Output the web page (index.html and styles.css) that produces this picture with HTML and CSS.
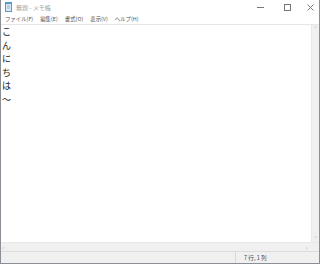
FILE: index.html
```html
<!DOCTYPE html>
<html lang="ja">
<head>
    <meta charset="UTF-8">
    <title>無題 - メモ帳</title>
    <link rel="stylesheet" href="styles.css">
</head>
<body>
    <div class="window">
        <div class="titlebar">
            <svg class="app-icon" width="9" height="10" viewBox="0 0 9 10">
                <rect x="1.5" y="0.5" width="6" height="9" fill="#d8eaf6" stroke="#5a9ac8"/>
                <rect x="1" y="0" width="7" height="2" fill="#5a9ac8"/>
                <line x1="3" y1="4" x2="6" y2="4" stroke="#8ab8dc"/>
                <line x1="3" y1="6" x2="6" y2="6" stroke="#8ab8dc"/>
            </svg>
            <span class="title">無題 - メモ帳</span>
            <div class="controls">
                <span class="ctl"><svg width="7" height="7" viewBox="0 0 7 7"><line x1="0" y1="3.5" x2="7" y2="3.5" stroke="#777"/></svg></span>
                <span class="ctl"><svg width="7" height="7" viewBox="0 0 7 7"><rect x="0.5" y="0.5" width="6" height="6" fill="none" stroke="#777"/></svg></span>
                <span class="ctl ctl-close"><svg width="7" height="7" viewBox="0 0 7 7"><path d="M0.5 0.5 L6.5 6.5 M6.5 0.5 L0.5 6.5" stroke="#777"/></svg></span>
            </div>
        </div>
        <div class="menubar">
            <span>ファイル(F)</span>
            <span>編集(E)</span>
            <span>書式(O)</span>
            <span>表示(V)</span>
            <span>ヘルプ(H)</span>
        </div>
        <div class="editor">
            <div class="edit-row">
                <div class="text">こ<br>ん<br>に<br>ち<br>は<br>～<br></div>
                <div class="vscroll">
                    <span class="arrow">˄</span>
                    <span class="arrow">˅</span>
                </div>
            </div>
            <div class="hscroll">
                <span class="arrow">‹</span>
                <span class="arrow">›</span>
                <span class="corner"></span>
            </div>
        </div>
        <div class="statusbar">
            <span class="status-left"></span>
            <span class="status-pos">7 行, 1 列</span>
            <span class="grip"></span>
        </div>
    </div>
</body>
</html>
```

FILE: styles.css
```css
html, body {
    margin: 0;
    padding: 0;
    height: 100%;
    background: #fff;
}
.window {
    height: 264px;
    box-sizing: border-box;
    border: 1px solid #8a8f96;
    border-top: none;
    display: flex;
    flex-direction: column;
    font-family: "Noto Sans CJK JP", "Noto Sans", sans-serif;
    background: #fff;
}
.titlebar {
    height: 14px;
    display: flex;
    align-items: center;
    padding-left: 3px;
}
.app-icon {
    margin-right: 3px;
}
.title {
    font-size: 6px;
    color: #a0a0a0;
    flex: 1;
}
.controls {
    display: flex;
}
.ctl {
    width: 27px;
    display: flex;
    justify-content: center;
    align-items: center;
}
.ctl-close {
    width: 18px;
}
.ctl svg {
    display: block;
}
.menubar {
    height: 10px;
    display: flex;
    align-items: center;
    gap: 7px;
    padding-left: 4px;
    font-size: 5.4px;
    color: #555;
    border-bottom: 1px solid #e6e6e6;
}
.editor {
    flex: 1;
    display: flex;
    flex-direction: column;
}
.edit-row {
    flex: 1;
    display: flex;
}
.text {
    flex: 1;
    padding: 0 0 0 1px;
    font-size: 9px;
    line-height: 13.6px;
    color: #222;
}
.vscroll {
    width: 7px;
    background: #f0f0f0;
    display: flex;
    flex-direction: column;
    justify-content: space-between;
    align-items: center;
    border-left: 1px solid #e8e8e8;
}
.hscroll {
    height: 8px;
    background: #f0f0f0;
    display: flex;
    align-items: center;
    justify-content: space-between;
    border-top: 1px solid #e8e8e8;
}
.arrow {
    font-family: "DejaVu Sans", sans-serif;
    font-size: 6px;
    line-height: 7px;
    color: #b0b0b0;
    padding: 0 1px;
}
.hscroll .arrow:nth-child(2) {
    margin-left: auto;
}
.corner {
    width: 7px;
    height: 8px;
    background: #f0f0f0;
    margin-left: 3px;
}
.statusbar {
    height: 11px;
    display: flex;
    align-items: center;
    background: #f0f0f0;
    border-top: 1px solid #dcdcdc;
    font-size: 5.6px;
    color: #444;
}
.status-left {
    flex: 1;
}
.status-pos {
    width: 76px;
    padding-left: 8px;
    border-left: 1px solid #d8d8d8;
    height: 100%;
    display: flex;
    align-items: center;
    box-sizing: border-box;
}
.grip {
    width: 8px;
}
```
